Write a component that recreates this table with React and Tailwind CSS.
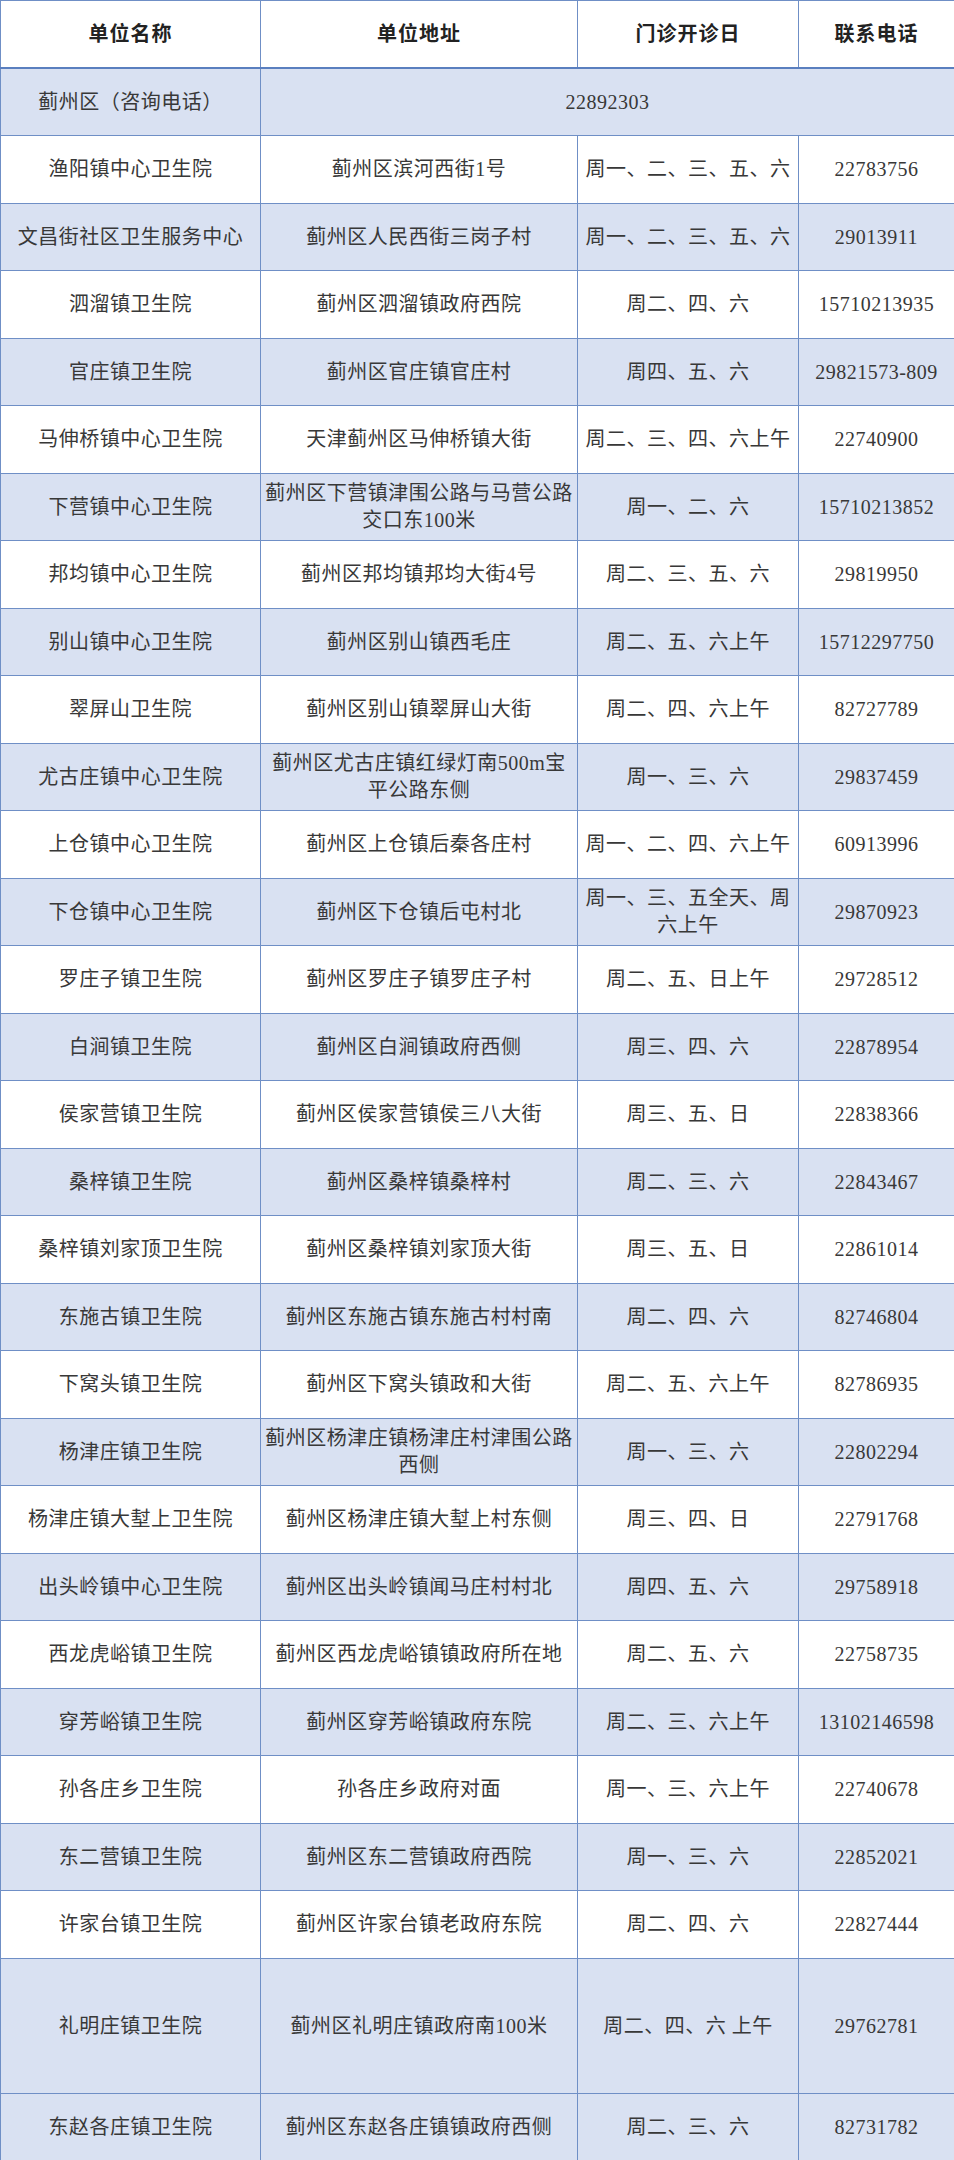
import React from "react";

const rows = [
  ["渔阳镇中心卫生院", "蓟州区滨河西街1号", "周一、二、三、五、六", "22783756"],
  ["文昌街社区卫生服务中心", "蓟州区人民西街三岗子村", "周一、二、三、五、六", "29013911"],
  ["泗溜镇卫生院", "蓟州区泗溜镇政府西院", "周二、四、六", "15710213935"],
  ["官庄镇卫生院", "蓟州区官庄镇官庄村", "周四、五、六", "29821573-809"],
  ["马伸桥镇中心卫生院", "天津蓟州区马伸桥镇大街", "周二、三、四、六上午", "22740900"],
  ["下营镇中心卫生院", ["蓟州区下营镇津围公路与马营公路", "交口东100米"], "周一、二、六", "15710213852"],
  ["邦均镇中心卫生院", "蓟州区邦均镇邦均大街4号", "周二、三、五、六", "29819950"],
  ["别山镇中心卫生院", "蓟州区别山镇西毛庄", "周二、五、六上午", "15712297750"],
  ["翠屏山卫生院", "蓟州区别山镇翠屏山大街", "周二、四、六上午", "82727789"],
  ["尤古庄镇中心卫生院", ["蓟州区尤古庄镇红绿灯南500m宝", "平公路东侧"], "周一、三、六", "29837459"],
  ["上仓镇中心卫生院", "蓟州区上仓镇后秦各庄村", "周一、二、四、六上午", "60913996"],
  ["下仓镇中心卫生院", "蓟州区下仓镇后屯村北", ["周一、三、五全天、周", "六上午"], "29870923"],
  ["罗庄子镇卫生院", "蓟州区罗庄子镇罗庄子村", "周二、五、日上午", "29728512"],
  ["白涧镇卫生院", "蓟州区白涧镇政府西侧", "周三、四、六", "22878954"],
  ["侯家营镇卫生院", "蓟州区侯家营镇侯三八大街", "周三、五、日", "22838366"],
  ["桑梓镇卫生院", "蓟州区桑梓镇桑梓村", "周二、三、六", "22843467"],
  ["桑梓镇刘家顶卫生院", "蓟州区桑梓镇刘家顶大街", "周三、五、日", "22861014"],
  ["东施古镇卫生院", "蓟州区东施古镇东施古村村南", "周二、四、六", "82746804"],
  ["下窝头镇卫生院", "蓟州区下窝头镇政和大街", "周二、五、六上午", "82786935"],
  ["杨津庄镇卫生院", ["蓟州区杨津庄镇杨津庄村津围公路", "西侧"], "周一、三、六", "22802294"],
  ["杨津庄镇大堼上卫生院", "蓟州区杨津庄镇大堼上村东侧", "周三、四、日", "22791768"],
  ["出头岭镇中心卫生院", "蓟州区出头岭镇闻马庄村村北", "周四、五、六", "29758918"],
  ["西龙虎峪镇卫生院", "蓟州区西龙虎峪镇镇政府所在地", "周二、五、六", "22758735"],
  ["穿芳峪镇卫生院", "蓟州区穿芳峪镇政府东院", "周二、三、六上午", "13102146598"],
  ["孙各庄乡卫生院", "孙各庄乡政府对面", "周一、三、六上午", "22740678"],
  ["东二营镇卫生院", "蓟州区东二营镇政府西院", "周一、三、六", "22852021"],
  ["许家台镇卫生院", "蓟州区许家台镇老政府东院", "周二、四、六", "22827444"],
  ["礼明庄镇卫生院", "蓟州区礼明庄镇政府南100米", "周二、四、六 上午", "29762781"],
  ["东赵各庄镇卫生院", "蓟州区东赵各庄镇镇政府西侧", "周二、三、六", "82731782"],
];

function Text({ value }) {
  if (Array.isArray(value)) {
    return (
      <div className="leading-[27px]">
        {value.map((line) => (
          <div key={line}>{line}</div>
        ))}
      </div>
    );
  }
  return <span>{value}</span>;
}

const cell = "border border-[#6f8fc6] text-center align-middle whitespace-nowrap p-0";

export default function App() {
  return (
    <div className="w-[954px] bg-white text-[20px] tracking-[0.5px] text-[#383838] [font-family:'Liberation_Serif','Noto_Sans_CJK_SC',serif]">
      <table className="w-[954px] border-collapse table-fixed">
        <colgroup>
          <col className="w-[260px]" />
          <col className="w-[317px]" />
          <col className="w-[221px]" />
          <col className="w-[156px]" />
        </colgroup>
        <thead>
          <tr className="h-[67px] bg-white">
            {["单位名称", "单位地址", "门诊开诊日", "联系电话"].map((h) => (
              <th
                key={h}
                className={cell + " border-b-2 border-b-[#5a7fbf] font-bold text-[#222] tracking-[1px]"}
              >
                {h}
              </th>
            ))}
          </tr>
        </thead>
        <tbody>
          <tr className="h-[68px] bg-[#d9e1f2]">
            <td className={cell}>蓟州区（咨询电话）</td>
            <td className={cell} colSpan={3}>
              22892303
            </td>
          </tr>
          {rows.map((r, i) => {
            const blue = i % 2 === 1 || i === rows.length - 1;
            const tall = i === rows.length - 2;
            const last = i === rows.length - 1;
            return (
              <tr
                key={r[0]}
                className={
                  (blue ? "bg-[#d9e1f2] " : "bg-white ") +
                  (tall ? "h-[135px]" : last ? "h-[68px]" : "h-[67.5px]")
                }
              >
                {r.map((v, j) => (
                  <td key={j} className={cell}>
                    <Text value={v} />
                  </td>
                ))}
              </tr>
            );
          })}
        </tbody>
      </table>
    </div>
  );
}
